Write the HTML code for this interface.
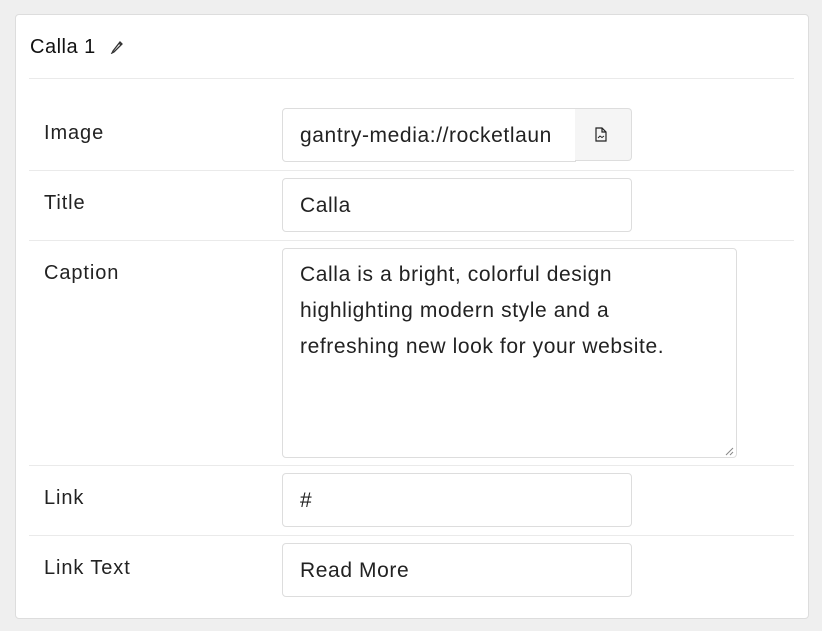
<!DOCTYPE html>
<html><head><style>
body{margin:0;width:822px;height:631px;background:#efefef;font-family:"Liberation Sans",sans-serif;color:#222;position:relative;overflow:hidden}
.card{position:absolute;left:15px;top:14px;width:792px;height:603px;background:#fff;border:1px solid #ddd;border-radius:4px}
.a{position:absolute}
.h{left:30px;top:36px;font-size:20px;color:#111;letter-spacing:0.5px}
.hr{left:29px;width:765px;height:1px;background:#eaeaea}
.lbl{left:44px;font-size:20px;color:#222;letter-spacing:0.9px;top:0}
.in{left:282px;border:1px solid #ddd;border-radius:4px;font-size:21px;line-height:54px;padding-left:17px;box-sizing:border-box;width:350px;height:54px;letter-spacing:0.6px}
</style></head><body>
<div class="card"></div>
<div class="a h">Calla 1</div>
<svg class="a" style="left:110px;top:40px" width="14" height="14" viewBox="0 0 14 14"><path d="M3 11 L2 13 L4 12 L12 4 L10 2 Z M9 3 L11 5" fill="none" stroke="#333" stroke-width="1.3"/></svg>
<div class="a hr" style="top:78px"></div>
<div class="a hr" style="top:170px"></div>
<div class="a hr" style="top:240px"></div>
<div class="a hr" style="top:465px"></div>
<div class="a hr" style="top:535px"></div>
<div class="a lbl" style="top:122px">Image</div>
<div class="a lbl" style="top:192px">Title</div>
<div class="a lbl" style="top:262px">Caption</div>
<div class="a lbl" style="top:487px">Link</div>
<div class="a lbl" style="top:557px">Link Text</div>
<div class="a in" style="top:108px;width:294px;border-radius:4px 0 0 4px;overflow:hidden;white-space:nowrap">gantry-media://rocketlaun</div>
<div class="a" style="left:575px;top:108px;width:57px;height:53px;background:#f5f5f5;border:1px solid #ddd;border-left:none;border-radius:0 4px 4px 0;box-sizing:border-box"></div>
<svg class="a" style="left:595px;top:127px" width="12" height="15" viewBox="0 0 12 15"><path d="M1 1 H7 L11 5 V14 H1 Z M7 1 V5 H11" fill="none" stroke="#222" stroke-width="1.2"/><path d="M3 11 L5 9 L7 10.5 L9 9" fill="none" stroke="#222" stroke-width="1"/></svg>
<div class="a in" style="top:178px">Calla</div>
<div class="a in" style="top:248px;width:455px;height:210px;line-height:36px;padding-top:8px">Calla is a bright, colorful design<br>highlighting modern style and a<br>refreshing new look for your website.</div>
<svg class="a" style="left:724px;top:446px" width="10" height="10"><path d="M2 9 L9 2 M6 9 L9 6" stroke="#888" stroke-width="1"/></svg>
<div class="a in" style="top:473px">#</div>
<div class="a in" style="top:543px">Read More</div>
</body></html>
